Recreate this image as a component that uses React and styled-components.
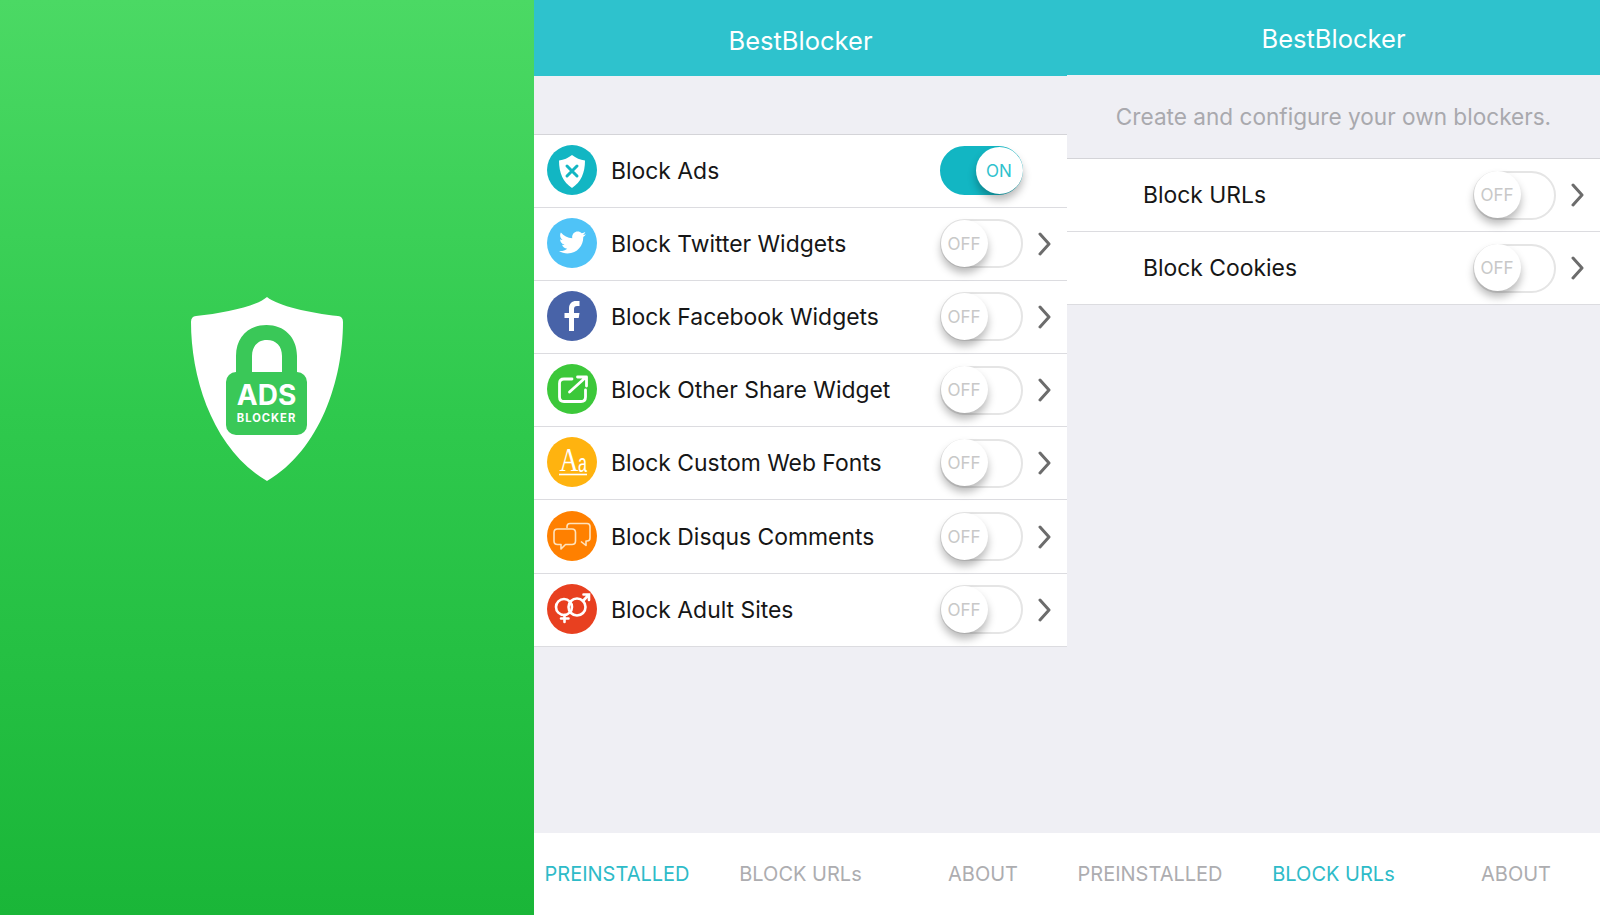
import React from 'react';
import styled, { createGlobalStyle } from 'styled-components';
import { FaTwitter } from 'react-icons/fa';

const GlobalStyle = createGlobalStyle`
  html, body { margin: 0; padding: 0; background: #efeff4; }
  body { font-family: Inter, "Noto Sans", sans-serif; overflow: hidden; }
`;

const Page = styled.div`
  display: grid;
  grid-template-columns: 534px 533px 533px;
  width: 1600px;
  height: 915px;
  overflow: hidden;
`;

const Splash = styled.section`
  display: flex;
  justify-content: center;
  align-items: flex-start;
  padding: 280px 0 0 6px;
  background: linear-gradient(180deg, #4bd964 0%, #2fc94d 45%, #1ab638 100%);
`;

const Phone = styled.section`
  display: flex;
  flex-direction: column;
  background: #efeff4;
`;

const Header = styled.header`
  display: flex;
  align-items: center;
  justify-content: center;
  box-sizing: border-box;
  height: ${(p) => p.$height}px;
  padding-top: ${(p) => p.$nudge}px;
  background: #2ec2cd;
  color: #fff;
  font-size: 25.5px;
  font-weight: 400;
`;

const Hint = styled.p`
  display: flex;
  align-items: center;
  justify-content: center;
  height: ${(p) => p.$height}px;
  margin: 0;
  box-sizing: border-box;
  color: #a9a9ae;
  font-size: 22.6px;
`;

const List = styled.ul`
  margin: 0;
  padding: 0;
  list-style: none;
  background: #fff;
  border-top: 1px solid #d4d4d8;
`;

const Row = styled.li`
  display: flex;
  align-items: center;
  box-sizing: border-box;
  height: 73.2px;
  padding-left: ${(p) => p.$inset}px;
  border-bottom: 1.5px solid #dcdce0;
`;

const Disc = styled.span`
  display: flex;
  flex: none;
  align-items: center;
  justify-content: center;
  width: 50px;
  height: 50px;
  margin: 0 14px 2px 0;
  border-radius: 50%;
  background: ${(p) => p.$bg};
  color: #fff;
`;

const Label = styled.span`
  flex: 1;
  color: #161616;
  font-size: 22.9px;
`;

const Track = styled.span`
  display: flex;
  flex: none;
  justify-content: ${(p) => (p.$on ? 'flex-end' : 'flex-start')};
  box-sizing: border-box;
  width: 83px;
  height: 49px;
  border-radius: 25px;
  border: 2.5px solid ${(p) => (p.$on ? '#12b6c3' : '#e5e5e5')};
  background: ${(p) => (p.$on ? '#12b6c3' : '#fff')};
`;

const Knob = styled.span`
  display: flex;
  align-items: center;
  justify-content: center;
  flex: none;
  width: 47px;
  height: 47px;
  margin: -1.5px;
  padding-top: 1px;
  box-sizing: border-box;
  border-radius: 50%;
  background: #fff;
  color: ${(p) => (p.$on ? '#2ec2cd' : '#c8c8c8')};
  font-size: 17px;
  box-shadow: 0 6px 9px rgba(0, 0, 0, 0.28);
`;

const ChevronSlot = styled.span`
  display: flex;
  flex: none;
  align-items: center;
  box-sizing: border-box;
  width: 44px;
  padding-left: 15px;
  color: #6c6c6c;
`;

const Spacer = styled.div`
  height: ${(p) => p.$height}px;
`;

const Fill = styled.div`
  flex: 1;
`;

const TabBar = styled.nav`
  display: grid;
  grid-template-columns: 166px 201px 164px;
  align-items: center;
  height: 82px;
  background: #fff;
`;

const Tab = styled.span`
  padding-bottom: 1px;
  text-align: center;
  color: ${(p) => (p.$active ? '#2ebbc8' : '#adadb0')};
  font-size: 20px;
`;

const ShieldLogo = () => (
  <svg width="200" height="210" viewBox="0 0 200 210">
    <path
      d="M97 17 C108 26 140 33 168 36 Q173 36.5 173 42 C173 100 150 170 97 201 C44 170 21 100 21 42 Q21 36.5 26 36 C55 33 87 26 97 17 Z"
      fill="#fff"
    />
    <path
      d="M66 94 V76 C66 57 79 45 96.5 45 C114 45 127 57 127 76 V94 H112 V76 C112 66 106 60 97 60 C88 60 82 66 82 76 V94 Z"
      fill="#3ac858"
    />
    <rect x="56" y="92" width="81" height="63" rx="10" fill="#3ac858" />
    <text x="96.5" y="125" textAnchor="middle" fill="#fff" fontFamily="Inter, sans-serif" fontSize="28" fontWeight="700">
      ADS
    </text>
    <text x="96.5" y="142" textAnchor="middle" fill="#fff" fontFamily="Inter, sans-serif" fontSize="11.2" fontWeight="700" letterSpacing="1">
      BLOCKER
    </text>
  </svg>
);

// Icons below are drawn in the 50x50 space of the disc
const DiscIcon = styled.svg.attrs({ width: 50, height: 50, viewBox: '0 0 50 50' })`
  display: block;
`;

const ShieldX = () => (
  <DiscIcon>
    <path d="M25 10 C29 13 33 15 38 15.5 C38 28 34 37 25 43 C16 37 12 28 12 15.5 C17 15 21 13 25 10 Z" fill="#fff" />
    <path d="M20 21 L30 31 M30 21 L20 31" stroke="#12b6c3" strokeWidth="3" strokeLinecap="round" />
  </DiscIcon>
);

const FacebookIcon = () => (
  <DiscIcon>
    <path d="M22 40 V27 H17.5 V22 H22 V17.5 C22 12.5 25 10 29 10 H32.5 V15 H30 C28 15 27 16 27 18 V22 H32.5 L31.7 27 H27 V40 Z" fill="#fff" />
  </DiscIcon>
);

const ShareIcon = () => (
  <DiscIcon fill="none" stroke="#fff" strokeWidth="2.8" strokeLinecap="round" strokeLinejoin="round">
    <path d="M25 15 H17 Q12.5 15 12.5 19.5 V33 Q12.5 37.5 17 37.5 H34 Q38.5 37.5 38.5 33 V26" />
    <path d="M22.5 28 L38 14 M30.5 13 H39.5 V22" />
  </DiscIcon>
);

const FontIcon = () => (
  <DiscIcon>
    <text transform="translate(12.5 34) scale(0.77 1)" fill="#fff" fontFamily='"Liberation Serif", serif' fontSize="34">
      A
    </text>
    <text transform="translate(31 34.5) scale(0.62 1)" fill="#fff" fontFamily='"Liberation Sans", sans-serif' fontSize="26">
      a
    </text>
    <path d="M12 37.5 H40" stroke="#fff" strokeWidth="1.6" />
  </DiscIcon>
);

const ChatIcon = () => (
  <DiscIcon fill="none" stroke="#ffe3bd" strokeWidth="1.6" strokeLinejoin="round">
    <path d="M20 17 V15.5 Q20 12.5 23 12.5 H40 Q43 12.5 43 15.5 V27 Q43 30 40 30 H39 V34.5 L34 30.5" />
    <path d="M10.5 18 H25 Q28.5 18 28.5 21.5 V30 Q28.5 33.5 25 33.5 H18.5 L14 38 V33.5 H10.5 Q7 33.5 7 30 V21.5 Q7 18 10.5 18 Z" />
  </DiscIcon>
);

const GenderIcon = () => (
  <DiscIcon fill="none" stroke="#fff" strokeWidth="2.6" strokeLinecap="round">
    <circle cx="17" cy="23" r="8" />
    <circle cx="30" cy="23" r="8.5" />
    <path d="M17.5 31 V38 M14 34.5 H21.5 M36 17 L41.5 11 M36.5 10.5 H42 V16" />
  </DiscIcon>
);

const Chevron = () => (
  <svg width="13" height="24" viewBox="0 0 13 24" fill="none" stroke="currentColor" strokeWidth="3" strokeLinecap="round" strokeLinejoin="round">
    <path d="M2 2 L11 12 L2 22" />
  </svg>
);

const Toggle = ({ on }) => (
  <Track $on={on}>
    <Knob $on={on}>{on ? 'ON' : 'OFF'}</Knob>
  </Track>
);

const BlockRow = ({ label, icon, bg, on, inset }) => (
  <Row $inset={inset}>
    {icon && <Disc $bg={bg}>{icon}</Disc>}
    <Label>{label}</Label>
    <Toggle on={on} />
    <ChevronSlot>{!on && <Chevron />}</ChevronSlot>
  </Row>
);

const Tabs = ({ active }) => (
  <TabBar>
    {['PREINSTALLED', 'BLOCK URLs', 'ABOUT'].map((name) => (
      <Tab key={name} $active={name === active}>
        {name}
      </Tab>
    ))}
  </TabBar>
);

const preinstalled = [
  { label: 'Block Ads', bg: '#12b6c3', on: true, icon: <ShieldX /> },
  { label: 'Block Twitter Widgets', bg: '#4fc3f7', icon: <FaTwitter size={27} /> },
  { label: 'Block Facebook Widgets', bg: '#4863a8', icon: <FacebookIcon /> },
  { label: 'Block Other Share Widget', bg: '#3cc83a', icon: <ShareIcon /> },
  { label: 'Block Custom Web Fonts', bg: '#ffb30f', icon: <FontIcon /> },
  { label: 'Block Disqus Comments', bg: '#ff8000', icon: <ChatIcon /> },
  { label: 'Block Adult Sites', bg: '#e84020', icon: <GenderIcon /> },
];

export default function App() {
  return (
    <Page>
      <GlobalStyle />
      <Splash>
        <ShieldLogo />
      </Splash>
      <Phone>
        <Header $height={76} $nudge={4}>BestBlocker</Header>
        <Spacer $height={57.5} />
        <List>
          {preinstalled.map((item) => (
            <BlockRow key={item.label} inset={13} {...item} />
          ))}
        </List>
        <Fill />
        <Tabs active="PREINSTALLED" />
      </Phone>
      <Phone>
        <Header $height={75} $nudge={2}>BestBlocker</Header>
        <Hint $height={83}>Create and configure your own blockers.</Hint>
        <List>
          <BlockRow label="Block URLs" inset={76} />
          <BlockRow label="Block Cookies" inset={76} />
        </List>
        <Fill />
        <Tabs active="BLOCK URLs" />
      </Phone>
    </Page>
  );
}
